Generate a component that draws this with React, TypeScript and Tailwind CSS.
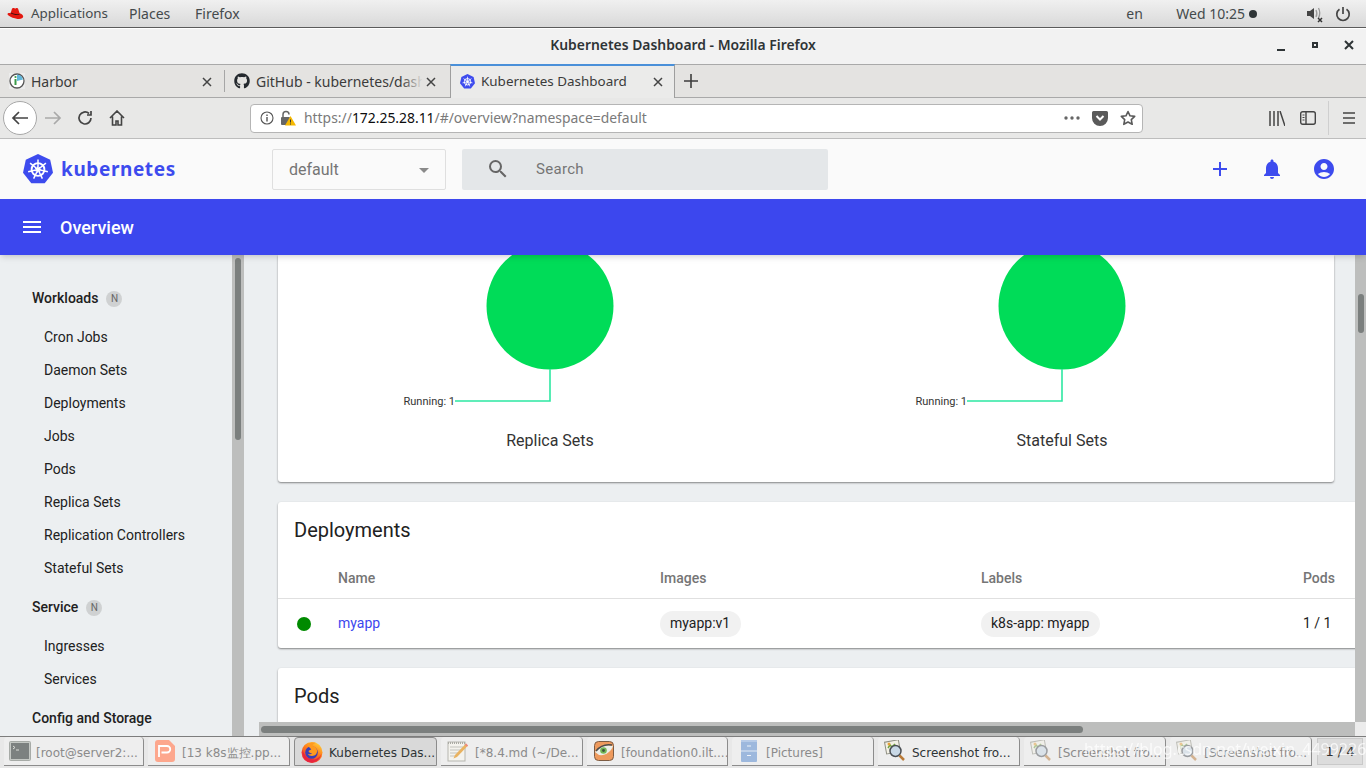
import React from "react";
import { MdAdd, MdNotifications, MdAccountCircle, MdMenu, MdSearch, MdArrowDropDown } from "react-icons/md";
import { FaGithub } from "react-icons/fa";

const RedHat = () => (
  <svg width="17" height="14" viewBox="0 0 17 14">
    <path d="M3.600 6.200 5 1.800C5.300 1 6 .8 6.800 1.100c.8.3 1.500.4 2.200.1.900-.4 1.800-.4 2.100.5l1.500 4.600c1.900.7 3.600 1.700 3.600 3.200 0 1.900-2.600 2.900-5.800 2.400C6.800 11.300 3.900 10.300 1.900 8.800.4 8 .2 6.800 1 6.300c.7-.4 1.700-.3 2.600-.1Z" fill="#e3170f" />
    <path d="M3.600 6.200c2.500 1.300 6.200 2.300 8.700 1.500l.2-.7c-2.800.6-5.900-.2-8.600-1.500Z" fill="#3a1010" />
  </svg>
);

const K8sLogo = ({ size = 30 }: { size?: number }) => {
  const spokes = [0, 51.4, 102.8, 154.3, 205.7, 257.1, 308.6];
  return (
    <svg width={size} height={size} viewBox="0 0 30 30" className="shrink-0">
      <path d="M15 0 27.200 5.800 30 18.700 21.700 29.200H8.300L0 18.700 2.800 5.800Z" fill="#3d4bee" strokeLinejoin="round" />
      <circle cx="15" cy="15.500" r="6.400" fill="none" stroke="#fff" strokeWidth="1.900" />
      {spokes.map((a) => (
        <g key={a} transform={`rotate(${a} 15 15.500)`}>
          <path d="M15 15.500V5.400" stroke="#fff" strokeWidth="1.500" />
          <path d="M15 15.500l-2.700 1.500" stroke="#fff" strokeWidth="1.100" />
        </g>
      ))}
      <circle cx="15" cy="15.500" r="1.600" fill="#fff" />
    </svg>
  );
};

const FirefoxIcon = () => (
  <svg width="22" height="22" viewBox="0 0 22 22">
    <defs>
      <linearGradient id="ff" x1="0.8" y1="0" x2="0.2" y2="1">
        <stop offset="0" stopColor="#ffd43a" />
        <stop offset="0.45" stopColor="#ff7a1a" />
        <stop offset="1" stopColor="#e5203f" />
      </linearGradient>
    </defs>
    <circle cx="11" cy="11.500" r="10.500" fill="url(#ff)" />
    <circle cx="10.500" cy="11.500" r="6.300" fill="#3b3fb5" />
    <path d="M6.500 3.500C9 1.500 12 1 15 2c-2.500.4-3 1.500-3.500 3 2 .2 4 1.500 4.500 4 .6 3-1.500 6-5 6-2 0-3.500-1-4.200-2.300 1.500 1 3.500.8 4.300-.4-1.500 0-3.300-.7-3.600-2.300 1-1 2-1.200 2.800-1.800C9.500 7 7.500 6.500 6.500 3.500Z" fill="#ff9a1f" />
    <path d="M1.500 9c1.500 5 5 9.500 11 9.500 3.500 0 6.500-2.500 8-6-1 5-5 9-9.500 9-6 0-10.500-5-9.500-12.500Z" fill="#e8253f" />
  </svg>
);

const TermIcon = ({ dim }: { dim?: boolean }) => (
  <svg width="22" height="20" viewBox="0 0 22 20" className={dim ? "opacity-70" : ""}>
    <rect x="0.500" y="0.500" width="21" height="19" rx="1" fill="#b3b8b3" stroke="#8a8f8a" />
    <rect x="2" y="2" width="18" height="16" fill="#4c5352" />
    <path d="M4 5l2 1.500L4 8M7 9h3" stroke="#d3d7cf" strokeWidth="1" fill="none" />
  </svg>
);
const WpsIcon = () => (
  <svg width="20" height="22" viewBox="0 0 20 22">
    <path d="M3 0h11l6 6v13a3 3 0 0 1-3 3H3a3 3 0 0 1-3-3V3a3 3 0 0 1 3-3Z" fill="#fda78d" />
    <path d="M4 17V6h8a3.200 3.200 0 0 1 0 6.500H6.500" fill="none" stroke="#fff" strokeWidth="1.800" />
  </svg>
);
const PadIcon = () => (
  <svg width="22" height="22" viewBox="0 0 22 22" className="opacity-80">
    <rect x="1" y="2" width="17" height="19" fill="#f6f5ef" stroke="#a8a8a0" />
    <path d="M1 3h17" stroke="#9a9a92" strokeWidth="2" strokeDasharray="1 1" />
    <path d="M3 7h13M3 10h13M3 13h8M3 16h6" stroke="#b9b9b2" />
    <path d="M19 3.500 21 5.500 10 17l-3.500 1.500L8 15Z" fill="#e9a53e" />
    <path d="M19 3.500 21 5.500 20 6.700 17.900 4.700Z" fill="#ef6a6a" />
  </svg>
);
const EyeIcon = () => (
  <svg width="20" height="20" viewBox="0 0 20 20" className="opacity-85">
    <rect x="0.500" y="0.500" width="19" height="19" rx="4" fill="#ee8c44" stroke="#6a4326" />
    <path d="M1 11C5 5 12 3 19 5c-2 6-8 10-14 9Z" fill="#eceee8" />
    <circle cx="9.500" cy="9.500" r="3.300" fill="#5fae3c" />
    <circle cx="9.500" cy="9.500" r="1.400" fill="#26361f" />
    <path d="M2 10C6 5 12 3 18 4" stroke="#33302c" strokeWidth="1.500" fill="none" />
  </svg>
);
const CabinetIcon = () => (
  <svg width="16" height="22" viewBox="0 0 16 22">
    <rect x="0" y="0" width="16" height="22" rx="1" fill="#9db8dd" />
    <rect x="0" y="0" width="16" height="2" fill="#b7cbe7" />
    <path d="M0 11h16" stroke="#e3ebf5" />
    <path d="M6 6h4M6 15.500h4" stroke="#eef3fa" strokeWidth="1.200" />
  </svg>
);
const ShotIcon = ({ dim }: { dim?: boolean }) => (
  <svg width="22" height="22" viewBox="0 0 22 22" className={dim ? "opacity-50" : ""}>
    <rect x="1.500" y="1" width="14" height="12" fill="#f3f1e6" stroke="#8d8d80" transform="rotate(-10 8 7)" />
    <path d="M4 8l2-3 2 2 3-3" stroke="#71a340" strokeWidth="1.500" fill="none" />
    <circle cx="5" cy="4" r="1.500" fill="#e5a03a" />
    <circle cx="11.500" cy="11" r="5.500" fill="#c8d8e6" stroke="#4a4f55" strokeWidth="1.500" />
    <path d="M15.500 15.500 20 20" stroke="#b97a38" strokeWidth="2.500" />
  </svg>
);

const Task = ({ w, icon, label, active, dim, iw = "w-[34px]" }: { w: string; icon: React.ReactNode; label: string; active?: boolean; dim?: boolean; iw?: string }) => (
  <div className={`${w} h-[29px] shrink-0 flex items-center rounded-t-sm border-b border-r border-[#8c8c8c] ${active ? "bg-[#d9d9d9] border-l border-t" : "bg-[#eeeeee]"}`}>
    <div className={`${iw} flex justify-center shrink-0`}>{icon}</div>
    <span className={`text-[12px] pt-[3px] whitespace-nowrap ${dim ? "text-[#8b8b8b]" : "text-[#2e3436]"}`}>{label}</span>
  </div>
);

const sideGroups = [
  { h: "Workloads", n: true, items: ["Cron Jobs", "Daemon Sets", "Deployments", "Jobs", "Pods", "Replica Sets", "Replication Controllers", "Stateful Sets"] },
  { h: "Service", n: true, items: ["Ingresses", "Services"] },
  { h: "Config and Storage", n: false, items: [] as string[] },
];

const Donut = ({ title }: { title: string }) => (
  <div className="flex flex-col items-center h-[227px]">
    <svg width="240" height="150" viewBox="0 0 240 150" className="shrink-0">
      <circle cx="120" cy="51" r="63.500" fill="#00dc58" />
      <path d="M120 114V146H25" fill="none" stroke="#2de8a2" strokeWidth="1.600" />
    </svg>
    <div className="relative w-[240px] h-0">
      <span className="absolute left-[-45px] top-[-10px] text-[11px] leading-[14px] text-[#333] w-[70px] text-right">Running: 1</span>
    </div>
    <div className="mt-[24px] text-base leading-[24px] text-[#333]">{title}</div>
  </div>
);

export default function App() {
  return (
    <div className="w-[1366px] h-[768px] overflow-hidden flex flex-col bg-white relative" style={{ fontFamily: '"Noto Sans", sans-serif' }}>
      {/* GNOME top bar */}
      <div className="h-[28px] shrink-0 bg-gradient-to-b from-[#f0f0f0] to-[#d9d9d9] border-b border-[#5b5b5b] flex items-center text-[14px] text-[#444a4c]">
        <div className="w-[31px] pl-[7px] flex"><RedHat /></div>
        <span className="w-[98px] text-[13.4px]">Applications</span>
        <span className="w-[66px]">Places</span>
        <span>Firefox</span>
        <div className="ml-auto flex items-center">
          <span className="w-[50px]">en</span>
          <span>Wed 10:25</span>
          <span className="w-2 h-2 rounded-full bg-[#2e3436] ml-[4px]" />
          <svg width="18" height="18" viewBox="0 0 18 18" className="ml-[49px]">
            <path d="M1 6h3l4-3v11l-4-3H1Z" fill="#444" />
            <path d="M10 5c1 2 1 5 0 7M12.500 3c1.500 3 1.500 7 0 10" stroke="#9a9a9a" strokeWidth="1.300" fill="none" />
            <path d="M12 13l4 4M16 13l-4 4" stroke="#333" strokeWidth="1.500" />
          </svg>
          <svg width="16" height="16" viewBox="0 0 16 16" className="ml-[11px] mr-[15px]">
            <path d="M8 1v7" stroke="#444" strokeWidth="1.700" />
            <path d="M4.500 3.200a6.200 6.200 0 1 0 7 0" fill="none" stroke="#444" strokeWidth="1.700" />
          </svg>
        </div>
      </div>

      {/* Window title bar */}
      <div className="h-[36px] shrink-0 bg-[#f2f2f2] border-t border-white relative flex items-center justify-center pb-[3px]">
        <span className="text-[13.9px] font-semibold text-[#2e3436]">Kubernetes Dashboard - Mozilla Firefox</span>
        <div className="absolute right-[10px] top-[8px] flex items-center gap-[20px]">
          <div className="w-[15px] h-[15px] flex items-end justify-center pb-[1px]"><div className="w-[8px] h-[2px] bg-[#2e3436]" /></div>
          <div className="w-[14px] h-[14px] flex items-center justify-center"><div className="w-[6px] h-[6px] border-2 border-[#2e3436]" /></div>
          <svg width="14" height="14" viewBox="0 0 14 14"><path d="M3 3l8 8M11 3l-8 8" stroke="#2e3436" strokeWidth="2" /></svg>
        </div>
      </div>

      {/* Tab strip */}
      <div className="h-[34px] shrink-0 bg-[#e4e3e1] border-t border-[#a9a9a9] border-b flex items-stretch text-[14px] text-[#3b3b3b]">
        <div className="w-[225px] flex items-center relative">
          <svg width="16" height="16" viewBox="0 0 16 16" className="ml-[9px] mr-[6px] shrink-0">
            <rect width="16" height="16" fill="#ececec" />
            <circle cx="8" cy="8" r="7" fill="#fff" stroke="#555" strokeWidth="1.300" />
            <path d="M8 1.500a6.500 6.500 0 0 1 6 5L8 8Z" fill="#60b8dc" />
            <path d="M6.500 6v6" stroke="#3b9a48" strokeWidth="2" />
            <circle cx="6.500" cy="4" r="1.100" fill="#3b9a48" />
          </svg>
          <span>Harbor</span>
          <svg width="12" height="12" viewBox="0 0 12 12" className="absolute left-[201px] top-[11px]"><path d="M2 2l8 8M10 2l-8 8" stroke="#444" strokeWidth="1.500" /></svg>
          <div className="absolute right-0 top-[5px] bottom-[5px] w-px bg-[#a6a6a6]" />
        </div>
        <div className="w-[225px] flex items-center relative">
          <FaGithub size={16} className="ml-[9px] mr-[6px] text-[#24292e] shrink-0" />
          <span className="whitespace-nowrap overflow-hidden w-[166px]">GitHub - kubernetes/dash</span>
          <div className="absolute left-[176px] top-0 bottom-0 w-[22px] bg-gradient-to-r from-transparent to-[#e4e3e1]" />
          <svg width="12" height="12" viewBox="0 0 12 12" className="absolute left-[200px] top-[11px]"><path d="M2 2l8 8M10 2l-8 8" stroke="#444" strokeWidth="1.500" /></svg>
        </div>
        <div className="w-[225px] flex items-center relative bg-[#ebebea] border-t-2 border-t-[#4a90d9] border-l border-r border-[#9e9e9e] -mt-px -mb-px pb-[2px] pl-[9px]">
          <K8sLogo size={15} />
          <span className="ml-[6px] whitespace-nowrap text-[13.45px]">Kubernetes Dashboard</span>
          <svg width="12" height="12" viewBox="0 0 12 12" className="absolute left-[201px] top-[10px]"><path d="M2 2l8 8M10 2l-8 8" stroke="#444" strokeWidth="1.500" /></svg>
        </div>
        <div className="w-[32px] flex items-center justify-center">
          <svg width="16" height="16" viewBox="0 0 16 16"><path d="M8 1v14M1 8h14" stroke="#3d3d3d" strokeWidth="1.600" /></svg>
        </div>
      </div>

      {/* Nav bar */}
      <div className="h-[41px] shrink-0 bg-[#e8e8e7] border-b border-[#bdbdbd] flex items-center relative">
        <div className="ml-[3px] w-[34px] h-[34px] rounded-full bg-white border border-[#a8a8a8] flex items-center justify-center">
          <svg width="18" height="16" viewBox="0 0 18 16"><path d="M17 8H2M8 2 2 8l6 6" stroke="#444" strokeWidth="1.700" fill="none" /></svg>
        </div>
        <svg width="18" height="16" viewBox="0 0 18 16" className="ml-[7px]"><path d="M1 8h15M10 2l6 6-6 6" stroke="#a9a9a9" strokeWidth="1.700" fill="none" /></svg>
        <svg width="16" height="16" viewBox="0 0 16 16" className="ml-[15px]"><path d="M14 8a6 6 0 1 1-2-4.500M14 1v4h-4" stroke="#444" strokeWidth="1.700" fill="none" /></svg>
        <svg width="16" height="16" viewBox="0 0 16 16" className="ml-[16px]"><path d="M1 8 8 1l7 7M3.500 6.500V15H7v-4h2v4h3.500V6.500" stroke="#444" strokeWidth="1.600" fill="none" /></svg>
        <div className="ml-[125px] w-[893px] h-[29px] rounded-[4px] bg-white border border-[#b5b5b5] flex items-center text-[13.9px] text-[#7a7a7a] whitespace-nowrap">
          <svg width="14" height="14" viewBox="0 0 14 14" className="ml-[9px]"><circle cx="7" cy="7" r="6" fill="none" stroke="#555" strokeWidth="1.100" /><path d="M7 6v4.500M7 3.500v1.500" stroke="#555" strokeWidth="1.400" /></svg>
          <svg width="16" height="16" viewBox="0 0 16 16" className="ml-[6px]">
            <path d="M3 7V4.500a3 3 0 0 1 6 0" fill="none" stroke="#666" strokeWidth="1.500" />
            <rect x="1" y="7" width="9" height="8" rx="1" fill="#666" />
            <path d="M10.500 6 16 15.500H5Z" fill="#f5b800" />
            <path d="M10.500 9.500v3M10.500 13.500v1" stroke="#333" strokeWidth="1" />
          </svg>
          <span className="ml-[8px]">https://<span className="text-[#0c0c0d]">172.25.28.11</span>/#/overview?namespace=default</span>
          <div className="ml-auto flex items-center">
            <svg width="16" height="4" viewBox="0 0 16 4"><circle cx="2" cy="2" r="1.700" fill="#666" /><circle cx="8" cy="2" r="1.700" fill="#666" /><circle cx="14" cy="2" r="1.700" fill="#666" /></svg>
            <svg width="16" height="15" viewBox="0 0 16 15" className="ml-[12px]"><path d="M1.500 0h13A1.500 1.500 0 0 1 16 1.500V7A8 8 0 0 1 0 7V1.500A1.500 1.500 0 0 1 1.500 0Z" fill="#5a5a5a" /><path d="M4.500 5 8 8.500 11.500 5" stroke="#fff" strokeWidth="2" fill="none" /></svg>
            <svg width="16" height="16" viewBox="0 0 16 16" className="ml-[12px] mr-[6px]"><path d="M8 1.500l2 4.300 4.700.6-3.400 3.200.9 4.700L8 12l-4.200 2.300.9-4.700L1.300 6.400 6 5.800Z" fill="none" stroke="#5a5a5a" strokeWidth="1.600" strokeLinejoin="round" /></svg>
          </div>
        </div>
        <svg width="16" height="15" viewBox="0 0 16 15" className="ml-[126px]"><path d="M1 0v15M5 0v15M9 0v15M11 0l5 15" stroke="#444" strokeWidth="1.500" /></svg>
        <svg width="16" height="14" viewBox="0 0 16 14" className="ml-[15px]"><rect x="0.700" y="0.700" width="14.600" height="12.600" rx="2" fill="none" stroke="#444" strokeWidth="1.400" /><path d="M6 1v12" stroke="#444" strokeWidth="1.400" /><path d="M2.500 4h2M2.500 6.500h2M2.500 9h2" stroke="#444" /></svg>
        <div className="ml-[12px] w-px h-[34px] bg-[#cfcfcf]" />
        <svg width="14" height="12" viewBox="0 0 14 12" className="ml-[13px]"><path d="M1 1h12M1 6h12M1 11h12" stroke="#444" strokeWidth="1.600" /></svg>
      </div>

      {/* Page content */}
      <div className="flex-1 min-h-0 flex flex-col" style={{ fontFamily: 'Roboto, sans-serif' }}>
        <div className="h-[60px] shrink-0 bg-[#fafafa] flex items-center relative">
          <div className="ml-[23px] flex items-center w-[249px]">
            <K8sLogo />
            <span className="ml-[8px] text-[19px] font-bold text-[#3d4bee] tracking-[0.6px] leading-none pt-[1px]" style={{ fontFamily: '"Noto Sans", sans-serif' }}>kubernetes</span>
          </div>
          <div className="w-[174px] h-[41px] rounded-[2px] border border-[#dfdfdf] flex items-center pl-[16px] pt-[1px] text-base text-[#757575]">
            default
            <MdArrowDropDown size={24} className="ml-auto mr-[9px] text-[#8a8a8a]" />
          </div>
          <div className="ml-[16px] w-[366px] h-[41px] rounded-[2px] bg-[#e4e7e9] flex items-center text-[15px] tracking-[0.3px] text-[#757575]">
            <MdSearch size={24} className="ml-[24px] text-[#666]" />
            <span className="ml-[26px] pt-[1px]">Search</span>
          </div>
          <div className="ml-auto flex items-center gap-[28px] mr-[30px] text-[#3d4bee]">
            <MdAdd size={24} />
            <MdNotifications size={24} />
            <MdAccountCircle size={24} />
          </div>
        </div>
        <div className="h-[56px] shrink-0 bg-[#3c47ee] flex items-center text-white shadow-md relative z-10">
          <MdMenu size={24} className="ml-[20px]" />
          <span className="ml-[16px] text-[18px] font-medium pt-[1px]">Overview</span>
        </div>

        <div className="flex-1 min-h-0 flex">
          {/* Sidebar */}
          <div className="w-[244px] shrink-0 flex bg-[#eceff1]">
            <div className="w-[232px] pt-[27px] flex flex-col gap-[6px] overflow-hidden text-[14px] text-[#212121]">
              {sideGroups.map((g) => (
                <div key={g.h} className="shrink-0">
                  <div className="h-[33px] pl-[32px] flex items-center font-medium">
                    {g.h}
                    {g.n && <span className="ml-[8px] w-4 h-4 rounded-full bg-[#cfd1d2] text-[#666] text-[10px] font-normal flex items-center justify-center">N</span>}
                  </div>
                  {g.items.length > 0 && (
                    <div className="mt-[6px]">
                      {g.items.map((i) => (
                        <div key={i} className="h-[33px] pl-[44px] flex items-center">{i}</div>
                      ))}
                    </div>
                  )}
                </div>
              ))}
            </div>
            <div className="w-[12px] bg-[#bdbebd] flex justify-center pt-[3px]">
              <div className="w-[6px] h-[182px] rounded-full bg-[#7b7f7e]" />
            </div>
          </div>

          {/* Main column */}
          <div className="flex-1 min-w-0 flex flex-col bg-[#eceff1]">
            <div className="flex-1 min-h-0 flex">
              <div className="flex-1 min-w-0 overflow-hidden pl-[34px]">
                <div className="w-[1056px] px-[16px] bg-white rounded-b-[3px] shadow-[0_1px_2px_rgba(0,0,0,0.45)] grid grid-cols-2">
                  <Donut title="Replica Sets" />
                  <Donut title="Stateful Sets" />
                </div>
                <div className="w-[1100px] mt-[20px] h-[146px] bg-white rounded-[3px] shadow-[0_1px_2px_rgba(0,0,0,0.45)] flex flex-col">
                  <div className="h-[56px] pl-[16px] flex items-center text-[20px] text-[#212121]">Deployments</div>
                  <div className="h-[41px] grid grid-cols-[60px_322px_321px_322px_1fr] items-center border-b border-[#e0e0e0] text-[14px] font-medium text-[#757575]">
                    <span />
                    <span>Name</span>
                    <span>Images</span>
                    <span>Labels</span>
                    <span>Pods</span>
                  </div>
                  <div className="flex-1 grid grid-cols-[60px_322px_321px_322px_1fr] items-center text-[14px] text-[#212121]">
                    <span className="ml-[19px] w-[14px] h-[14px] rounded-full bg-[#008a00]" />
                    <span className="text-[#3c47ee]">myapp</span>
                    <span><span className="inline-flex items-center h-[26px] pl-[10px] pr-[11px] rounded-full bg-[#f1f1f1]">myapp:v1</span></span>
                    <span><span className="inline-flex items-center h-[26px] pl-[10px] pr-[11px] rounded-full bg-[#f1f1f1]">k8s-app: myapp</span></span>
                    <span>1 / 1</span>
                  </div>
                </div>
                <div className="w-[1100px] mt-[20px] h-[200px] bg-white rounded-[3px] shadow-[0_1px_2px_rgba(0,0,0,0.45)]">
                  <div className="h-[56px] pl-[16px] flex items-center text-[20px] text-[#212121]">Pods</div>
                </div>
              </div>
              <div className="w-[11px] shrink-0 bg-[#bdbebd] pt-[39px] flex justify-center">
                <div className="w-[6px] h-[39px] rounded-full bg-[#7b7f7e]" />
              </div>
            </div>
            <div className="h-[14px] shrink-0 flex">
              <div className="w-[15px] bg-[#eceff1]" />
              <div className="flex-1 bg-[#bdbebd] flex items-center pl-[2px]">
                <div className="w-[822px] h-[7px] rounded-full bg-[#7b7f7e]" />
              </div>
              <div className="w-[11px] bg-[#ececec]" />
            </div>
          </div>
        </div>
      </div>

      {/* Task bar */}
      <div className="h-[32px] shrink-0 bg-[#e8e8e8] border-t border-[#7d7d7d] flex items-start gap-[4px] pl-[4px]" style={{ fontFamily: '"DejaVu Sans", sans-serif' }}>
        <Task w="w-[140px]" iw="w-[32px]" icon={<TermIcon dim />} label="[root@server2:..." dim />
        <Task w="w-[142px]" icon={<WpsIcon />} label="[13 k8s监控.pp..." dim />
        <Task w="w-[143px]" icon={<FirefoxIcon />} label="Kubernetes Das..." active />
        <Task w="w-[142px]" icon={<PadIcon />} label="[*8.4.md (~/De..." dim />
        <Task w="w-[141px]" icon={<EyeIcon />} label="[foundation0.ilt...." dim />
        <Task w="w-[142px]" icon={<CabinetIcon />} label="[Pictures]" dim />
        <Task w="w-[142px]" icon={<ShotIcon />} label="Screenshot fro..." />
        <Task w="w-[142px]" icon={<ShotIcon dim />} label="[Screenshot fro..." dim />
        <Task w="w-[142px]" icon={<ShotIcon dim />} label="[Screenshot fro..." dim />
        <div className="w-[46px] h-[27px] mt-[1px] ml-[1px] bg-[#dcdcdc] border border-[#c9c9c9] text-[13px] text-[#333] flex items-center justify-center">1 / 4</div>
      </div>
      {/* CSDN watermark */}
      <span className="absolute left-[1084px] top-[737px] text-[16px] text-white/75 whitespace-nowrap blur-[0.5px] pointer-events-none" style={{ fontFamily: '"Noto Sans", sans-serif' }}>https://blog.csdn.net/weixin_44992260</span>
    </div>
  );
}
